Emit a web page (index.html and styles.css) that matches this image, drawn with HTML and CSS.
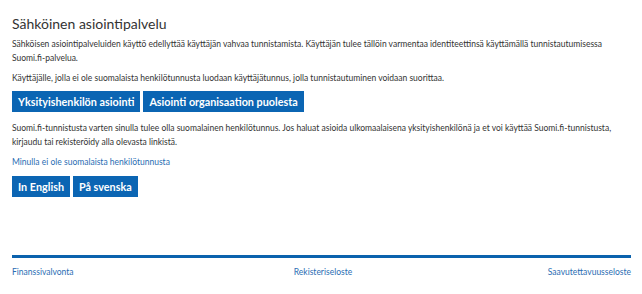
FILE: index.html
```html
<!DOCTYPE html>
<html lang="fi">
<head>
    <meta charset="UTF-8">
    <title>Sähköinen asiointipalvelu</title>
    <meta name="viewport" content="width=device-width, initial-scale=1.0">
    <link rel="stylesheet" href="styles.css">
</head>
<body>
    <div class="page">
        <!-- Main content -->
        <main class="content">
            <h1 class="title">Sähköinen asiointipalvelu</h1>
            <p>Sähköisen asiointipalveluiden käyttö edellyttää käyttäjän vahvaa tunnistamista. Käyttäjän tulee tällöin varmentaa identiteettinsä käyttämällä tunnistautumisessa Suomi.fi-palvelua.</p>
            <p>Käyttäjälle, jolla ei ole suomalaista henkilötunnusta luodaan käyttäjätunnus, jolla tunnistautuminen voidaan suorittaa.</p>
            <div class="btn-row">
                <a href="#" class="btn">Yksityishenkilön asiointi</a>
                <a href="#" class="btn">Asiointi organisaation puolesta</a>
            </div>
            <p>Suomi.fi-tunnistusta varten sinulla tulee olla suomalainen henkilötunnus. Jos haluat asioida ulkomaalaisena yksityishenkilönä ja et voi käyttää Suomi.fi-tunnistusta, kirjaudu tai rekisteröidy alla olevasta linkistä.</p>
            <p class="link-para"><a href="#" class="link">Minulla ei ole suomalaista henkilötunnusta</a></p>
            <div class="btn-row">
                <a href="#" class="btn">In English</a>
                <a href="#" class="btn">På svenska</a>
            </div>
        </main>

        <!-- Footer -->
        <footer class="footer">
            <a href="#" class="link">Finanssivalvonta</a>
            <a href="#" class="link footer-mid">Rekisteriseloste</a>
            <a href="#" class="link footer-right">Saavutettavuusseloste</a>
        </footer>
    </div>
</body>
</html>
```

FILE: styles.css
```css
/* Reset */
* {
    box-sizing: border-box;
    margin: 0;
    padding: 0;
}

body {
    font-family: 'Lato', 'Open Sans', sans-serif;
    font-size: 8.5px;
    line-height: 14px;
    color: #333333;
    background-color: #ffffff;
}

.page {
    min-height: 100vh;
    display: flex;
    flex-direction: column;
    padding: 0 11px 0 12px;
}

/* Main content */
.content {
    padding-top: 16px;
}

.title {
    font-size: 14px;
    font-weight: 400;
    line-height: 16px;
    color: #333333;
    margin-bottom: 5px;
}

.content p {
    margin-bottom: 6px;
}

.content .link-para {
    margin-bottom: 7px;
}

.link {
    color: #2a6db3;
    text-decoration: none;
}

.btn-row {
    display: flex;
    gap: 3px;
    margin: 1px 0 9px;
}

.btn {
    display: inline-block;
    background-color: #0b65b3;
    color: #ffffff;
    font-size: 10.8px;
    font-weight: 700;
    line-height: 21px;
    padding: 0 6px;
    text-decoration: none;
}

/* Footer */
.footer {
    margin-top: auto;
    margin-bottom: 15px;
    border-top: 3px solid #0b62ad;
    padding-top: 7px;
    display: grid;
    grid-template-columns: 1fr auto 1fr;
}

.footer-mid {
    padding-left: 3px;
}

.footer-right {
    text-align: right;
}
```
